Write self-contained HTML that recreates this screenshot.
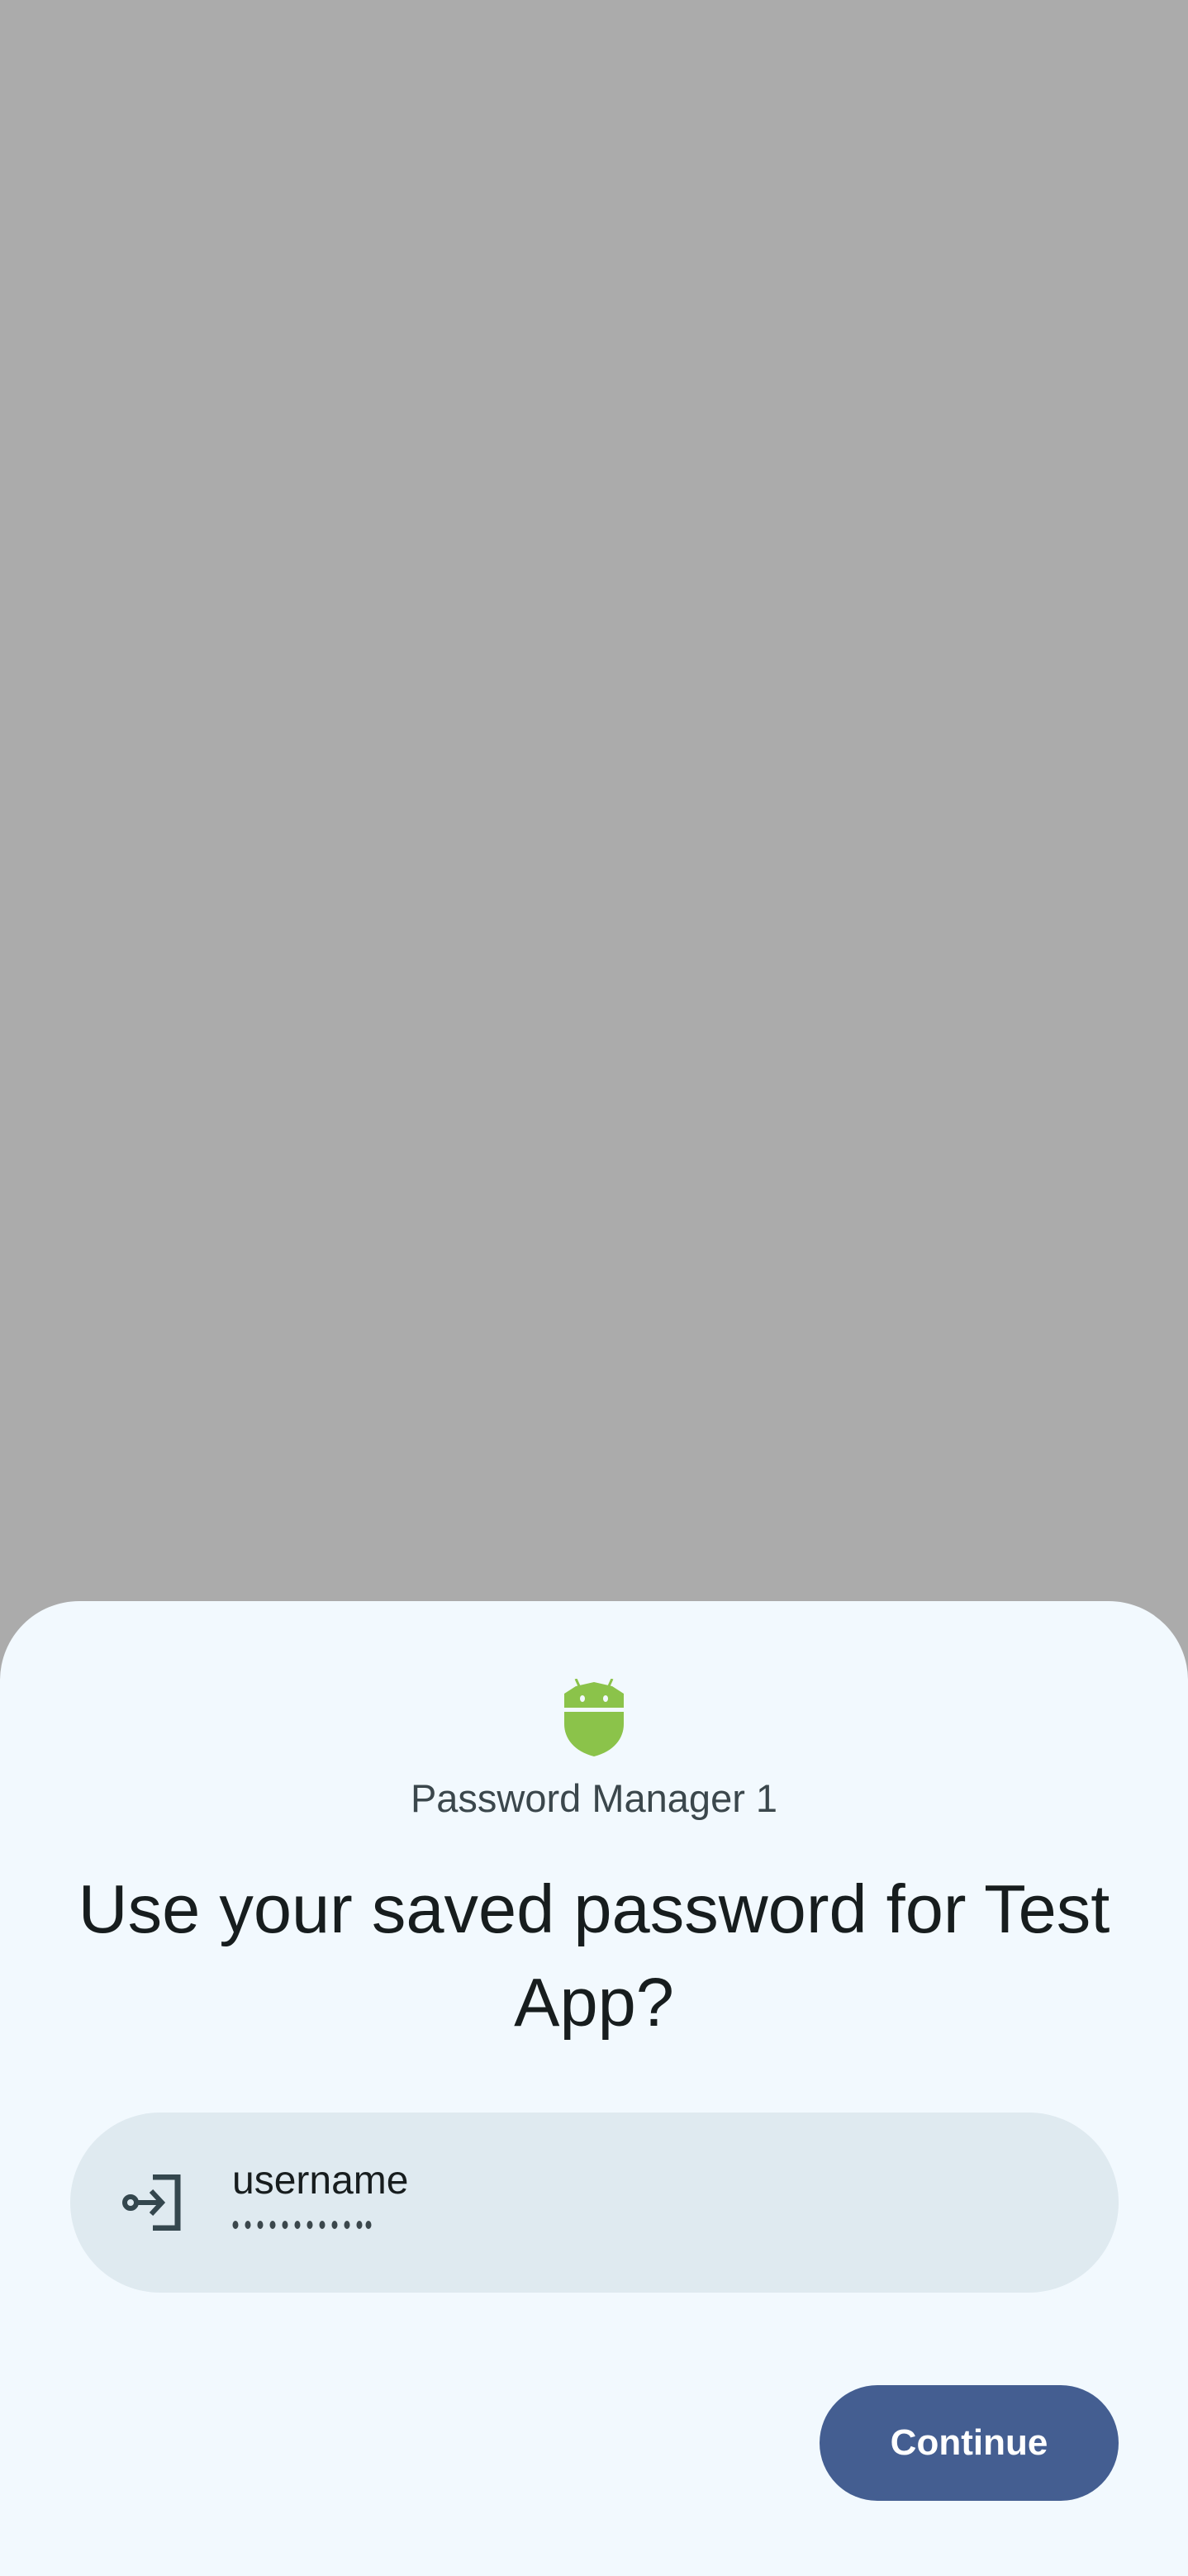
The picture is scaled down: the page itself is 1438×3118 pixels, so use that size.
<!DOCTYPE html>
<html><head><meta charset="utf-8"><style>
html,body{margin:0;padding:0}
body{width:1438px;height:3118px;background:#ababab;position:relative;overflow:hidden;font-family:"Liberation Sans",sans-serif}
.sheet{position:absolute;left:0;top:1938px;width:1438px;height:1180px;background:#f2f9fe;border-radius:96px 96px 0 0}
.abs{position:absolute}
</style></head><body>
<div class="sheet"></div>
<svg class="abs" style="left:683px;top:2032px" width="72" height="94" viewBox="0 0 72 94">
<path d="M14 0 L19 11 M58 0 L53 11" stroke="#8bc34a" stroke-width="3"/>
<path d="M0 18 L14 9 L36 4 L58 9 L72 18 L72 35 L0 35 Z" fill="#8bc34a"/>
<path d="M0 40 L72 40 L72 55 C72 72 60 88 36 94 C12 88 0 72 0 55 Z" fill="#8bc34a"/>
<ellipse cx="22" cy="24" rx="3" ry="4" fill="#f2f9fe"/><ellipse cx="50" cy="24" rx="3" ry="4" fill="#f2f9fe"/>
</svg>
<div class="abs" style="left:0;width:1438px;top:2147px;text-align:center;font-size:47px;color:#3b474c;line-height:60px">Password Manager 1</div>
<div class="abs" style="left:40px;width:1358px;top:2254px;text-align:center;font-size:83px;color:#171d1e;line-height:113px">Use your saved password for Test App?</div>
<div class="abs" style="left:85px;top:2557px;width:1269px;height:218px;border-radius:109px;background:#dfeaf0"></div>
<svg class="abs" style="left:145px;top:2632px" width="74" height="68" viewBox="0 0 74 68">
<path d="M40 3 H70 V65 H40" fill="none" stroke="#34474e" stroke-width="7"/>
<circle cx="13" cy="34" r="7" fill="none" stroke="#34474e" stroke-width="6"/>
<path d="M20 34 H50 M38 20 L51 34 L38 48" fill="none" stroke="#34474e" stroke-width="6"/>
</svg>
<div class="abs" style="left:281px;top:2610px;font-size:48px;color:#171d1e;line-height:60px">username</div>
<svg class="abs" style="left:281px;top:2686px" width="170" height="14" viewBox="0 0 170 14">
<g fill="#3b474c">
<ellipse cx="4" cy="7" rx="3.5" ry="5"/><ellipse cx="19" cy="7" rx="3.5" ry="5"/><ellipse cx="34" cy="7" rx="3.5" ry="5"/><ellipse cx="49" cy="7" rx="3.5" ry="5"/><ellipse cx="64" cy="7" rx="3.5" ry="5"/><ellipse cx="79" cy="7" rx="3.5" ry="5"/><ellipse cx="94" cy="7" rx="3.5" ry="5"/><ellipse cx="109" cy="7" rx="3.5" ry="5"/><ellipse cx="124" cy="7" rx="3.5" ry="5"/><ellipse cx="139" cy="7" rx="3.5" ry="5"/><ellipse cx="154" cy="7" rx="3.5" ry="5"/><ellipse cx="165" cy="7" rx="3.5" ry="5"/>
</g></svg>
<div class="abs" style="left:992px;top:2887px;width:362px;height:140px;border-radius:70px;background:#445e91;color:#fff;font-size:44px;font-weight:bold;text-align:center;line-height:140px">Continue</div>
</body></html>
